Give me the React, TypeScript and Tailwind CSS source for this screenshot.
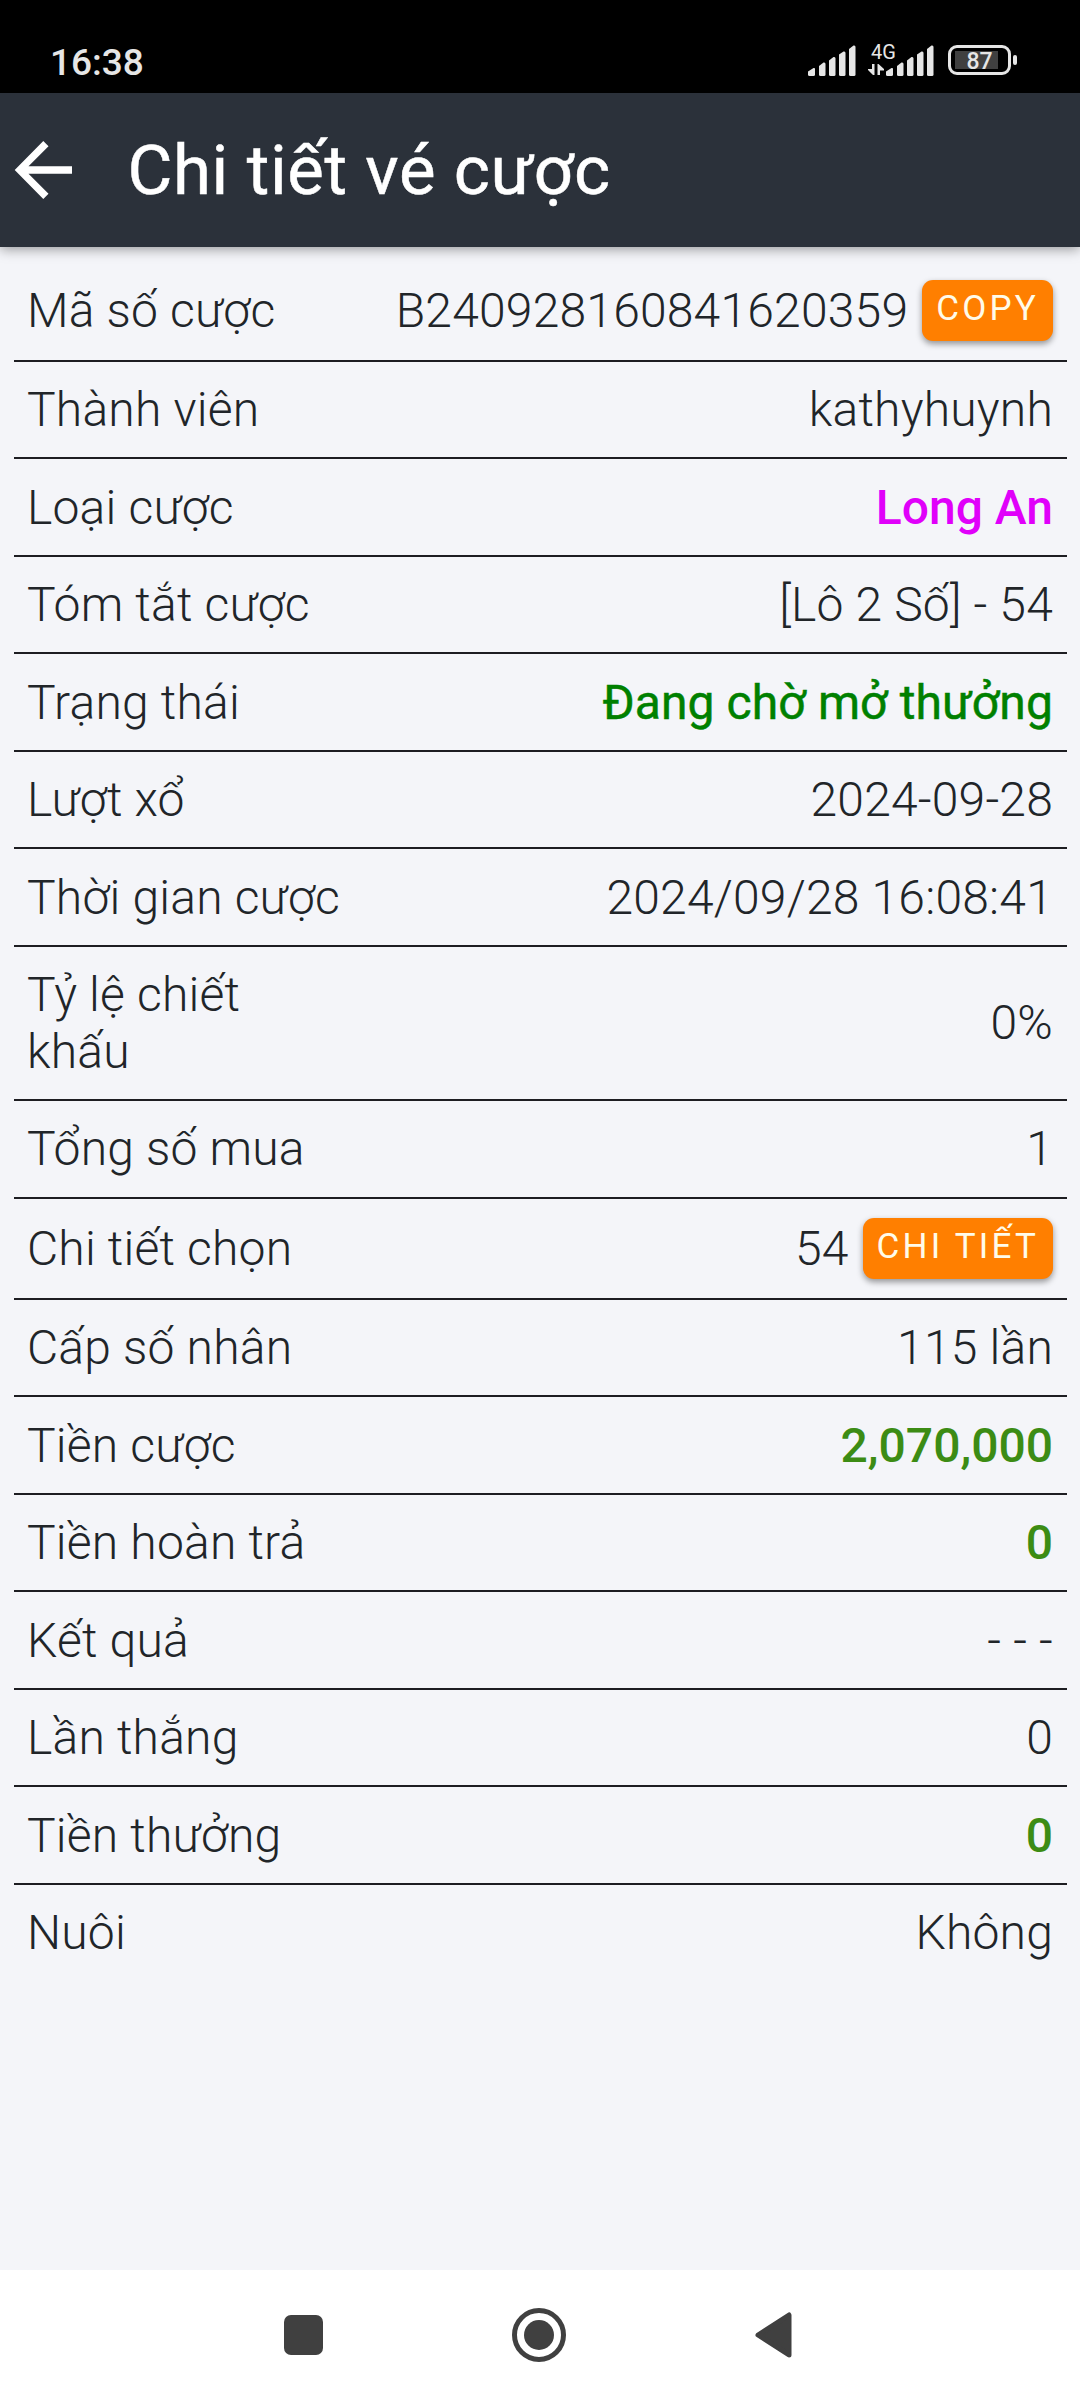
import { ReactNode } from 'react';
import clsx from 'clsx';

interface DetailRow {
  label: string;
  value: string;
  valueClass?: string;
  action?: string;
}

const rows: DetailRow[] = [
  { label: 'Mã số cược', value: 'B240928160841620359', action: 'COPY' },
  { label: 'Thành viên', value: 'kathyhuynh' },
  { label: 'Loại cược', value: 'Long An', valueClass: 'font-medium tracking-normal text-[#e000fa]' },
  { label: 'Tóm tắt cược', value: '[Lô 2 Số] - 54' },
  {
    label: 'Trạng thái',
    value: 'Đang chờ mở thưởng',
    valueClass: 'font-normal tracking-[0.1px] text-[#008000] [-webkit-text-stroke:0.5px]',
  },
  { label: 'Lượt xổ', value: '2024-09-28' },
  { label: 'Thời gian cược', value: '2024/09/28 16:08:41' },
  { label: 'Tỷ lệ chiết khấu', value: '0%' },
  { label: 'Tổng số mua', value: '1' },
  { label: 'Chi tiết chọn', value: '54', action: 'CHI TIẾT' },
  { label: 'Cấp số nhân', value: '115 lần' },
  { label: 'Tiền cược', value: '2,070,000', valueClass: 'font-medium tracking-normal text-[#3c8c14]' },
  { label: 'Tiền hoàn trả', value: '0', valueClass: 'font-medium tracking-normal text-[#3c8c14]' },
  { label: 'Kết quả', value: '- - -' },
  { label: 'Lần thắng', value: '0' },
  { label: 'Tiền thưởng', value: '0', valueClass: 'font-medium tracking-normal text-[#3c8c14]' },
  { label: 'Nuôi', value: 'Không' },
];

function SignalBars() {
  return (
    <svg width="48" height="31" viewBox="0 0 48 31" fill="#e6e6e6">
      <path d="M0 26.5 5.5 23Q7 22.500 7 24V29.500Q7 31 5.500 31H1.500Q0 31 0 29.500Z" />
      <path d="M11 21 15.500 17.500Q17.500 17 17.500 19V29.500Q17.500 31 16 31H12.500Q11 31 11 29.500Z" />
      <path d="M21 15.500 25.500 12Q27.500 11.500 27.500 13.500V29.500Q27.500 31 26 31H22.500Q21 31 21 29.500Z" />
      <path d="M31 9.500 35.500 6.500Q37.500 6 37.500 8V29.500Q37.500 31 36 31H32.500Q31 31 31 29.500Z" />
      <path d="M41 4 45.500 .5Q47.500 0 47.500 2V29.500Q47.500 31 46 31H42.500Q41 31 41 29.500Z" />
    </svg>
  );
}

function StatusBar() {
  return (
    <div className="flex h-[93px] items-start justify-between bg-black pl-[50px] pr-[63px] text-[#e6e6e6]">
      <span className="pt-[42px] text-[37px] font-medium leading-[42px]">16:38</span>
      <div className="flex items-start pt-[45px]">
        <SignalBars />
        <div className="-mt-[4px] ml-[12px] h-[35px] w-[18px]">
          <div className="ml-[3px] h-[20px] whitespace-nowrap text-[20px] leading-[22px]">4G</div>
          <svg width="16" height="12" viewBox="0 0 16 12" fill="#e6e6e6" className="mt-[3px]">
            <path d="M4 0H6.500V11H5L0 6V5H4Z" />
            <path d="M9.500 11H12V6.500H16V5L10.500 0H9.500Z" />
          </svg>
        </div>
        <SignalBars />
        <div className="ml-[14px] flex h-[30px] w-[63px] rounded-[9px] border-[3px] border-[#e6e6e6] p-[3px] pl-[4px]">
          <div className="flex h-[18px] w-[43px] items-center justify-center bg-[#404040] pl-[6px] pt-[3px] text-[23px] font-medium leading-[18px]">
            87
          </div>
        </div>
        <div className="ml-[2px] mt-[10px] h-[10px] w-[4px] rounded-sm bg-[#e6e6e6]" />
      </div>
    </div>
  );
}

function Header() {
  return (
    <header className="relative flex h-[154px] items-center bg-[#2b313a] pl-[14px] text-white shadow-[0_2px_12px_rgba(0,0,0,0.4)]">
      <svg width="58" height="58" viewBox="0 0 58 58" fill="currentColor">
        <path d="M.7 29 29.300 0 34.500 5.200 14.500 25.200H58V32.800H14.500L34.500 52.800 29.300 58Z" />
      </svg>
      <h1 className="ml-[55.500px] pt-[2px] text-[69px] font-normal leading-[80px] tracking-[0.6px] [-webkit-text-stroke:0.5px]">
        Chi tiết vé cược
      </h1>
    </header>
  );
}

function ActionButton({ children }: { children: ReactNode }) {
  return (
    <button className="ml-[14px] h-[61px] rounded-[11px] bg-[#ff7f00] px-[14px] pb-[4px] text-[35px] font-normal leading-[57px] tracking-[3.200px] text-[#fffbe9] shadow-[0_3px_6px_rgba(0,0,0,0.4)]">
      {children}
    </button>
  );
}

function Row({ label, value, valueClass, action }: DetailRow) {
  return (
    <div
      className={clsx(
        'flex items-center justify-between border-b-2 border-[#1d1d22] pl-[13px] pr-[14px] last:border-transparent',
        action ? 'h-[101.2px]' : 'min-h-[97.5px] py-[19.2px]',
      )}
    >
      <span className="max-w-[316px]">{label}</span>
      <div className="flex items-center">
        <span className={valueClass}>{value}</span>
        {action && <ActionButton>{action}</ActionButton>}
      </div>
    </div>
  );
}

function NavBar() {
  return (
    <nav className="flex h-[130px] items-center bg-white pl-[284px]">
      <div className="h-[40px] w-[39px] rounded-[7px] bg-[#404040]" />
      <svg width="54" height="54" viewBox="0 0 54 54" className="ml-[189px]">
        <circle cx="27" cy="27" r="24.500" fill="none" stroke="#404040" strokeWidth="5" />
        <circle cx="27" cy="27" r="15" fill="#404040" />
      </svg>
      <svg width="37" height="46" viewBox="0 0 37 46" className="ml-[189px]">
        <path
          d="M3 23 34 3V43Z"
          fill="#404040"
          stroke="#404040"
          strokeWidth="5"
          strokeLinejoin="round"
        />
      </svg>
    </nav>
  );
}

export default function App() {
  return (
    <div className="flex h-[2400px] w-[1080px] flex-col overflow-hidden bg-[#f4f5f9] font-[Roboto,sans-serif]">
      <StatusBar />
      <Header />
      <main className="flex-1 pl-[14px] pr-[13px] pt-[13.600px] text-[48px] font-light leading-[57px] tracking-[0.2px] text-[#212529]">
        {rows.map((row) => (
          <Row key={row.label} {...row} />
        ))}
      </main>
      <NavBar />
    </div>
  );
}
